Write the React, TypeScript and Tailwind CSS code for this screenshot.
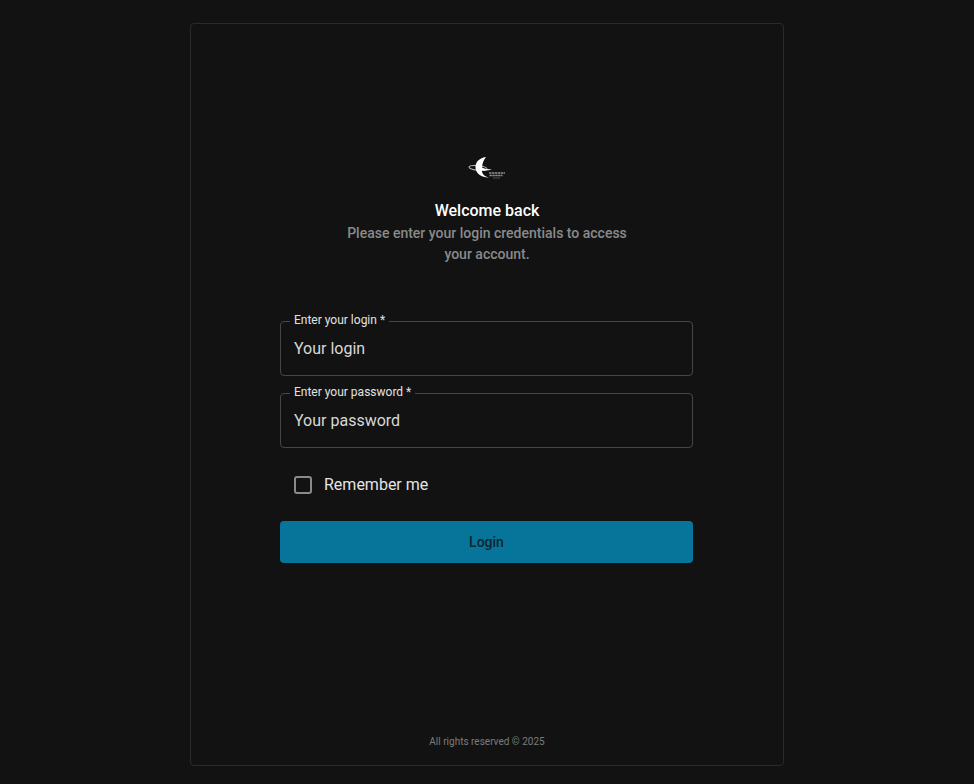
import React from 'react';

const font = { fontFamily: 'Roboto, sans-serif' };

function Logo() {
  return (
    <svg width="38" height="24" viewBox="0 0 38 24" fill="none" className="block">
      <ellipse cx="10" cy="12" rx="9" ry="2.300" stroke="#bdbdbd" strokeWidth="1" transform="rotate(6 10 12)" />
      <path d="M18 1C10.500 2 6.800 7 7.600 12.500 8.500 18 14 21.800 21 21.500c-4.500-1-7-3.500-7.200-7.300 3.500.5 7.200.3 10.200-.8-3.500-.1-7-.6-10-2C14.200 7.800 15.500 4 18 1Z" fill="#fff" />
      <path d="M21 17h16M21.500 19.500h13" stroke="#8f8f8f" strokeWidth="1.400" strokeDasharray="2.400 0.500" />
      <path d="M25 22h7" stroke="#5f5f5f" strokeWidth="0.800" />
    </svg>
  );
}

function Field({ label, placeholder }: { label: string; placeholder: string }) {
  return (
    <fieldset className="h-[63px] rounded-[4px] border border-[#464646] px-[13px] -mt-[8px]">
      <legend className="-ml-[4px] px-[4px] pb-[2px] text-[12px] leading-[14px] text-[#e2e2e2]">{label}</legend>
      <div className="pt-[8px] text-[16px] leading-[24px] text-[#d8d8d8]">{placeholder}</div>
    </fieldset>
  );
}

export default function App() {
  return (
    <div className="h-[784px] bg-[#121212] pt-[23px] pl-[190px]" style={font}>
      <div className="flex h-[743px] w-[594px] flex-col items-center rounded-[4px] border border-[#2a2a2a] pt-[132px]">
        <Logo />
        <h1 className="mt-[19px] text-[16px] font-medium leading-[24px] text-white">Welcome back</h1>
        <p className="w-[300px] text-center text-[14px] font-medium leading-[21px] text-[#8a8a8a]">
          Please enter your login credentials to access your account.
        </p>
        <form className="mt-[56px] mr-[1px] flex w-[413px] flex-col">
          <div className="flex flex-col gap-[17px]">
            <Field label="Enter your login *" placeholder="Your login" />
            <Field label="Enter your password *" placeholder="Your password" />
          </div>
          <label className="mt-[25px] flex h-[24px] items-center pl-[14px]">
            <span className="h-[18px] w-[18px] rounded-[3px] border-2 border-[#8a8a8a]" />
            <span className="ml-[12px] text-[16px] leading-[24px] text-[#e4e4e4]">Remember me</span>
          </label>
          <button type="button" className="mt-[24px] h-[42px] rounded-[4px] bg-[#07749a] text-[14px] font-medium text-[#0f2530]">
            Login
          </button>
        </form>
        <div className="mt-auto mb-[16px] text-[10px] leading-[14px] text-[#7c7c7c]">All rights reserved © 2025</div>
      </div>
    </div>
  );
}
